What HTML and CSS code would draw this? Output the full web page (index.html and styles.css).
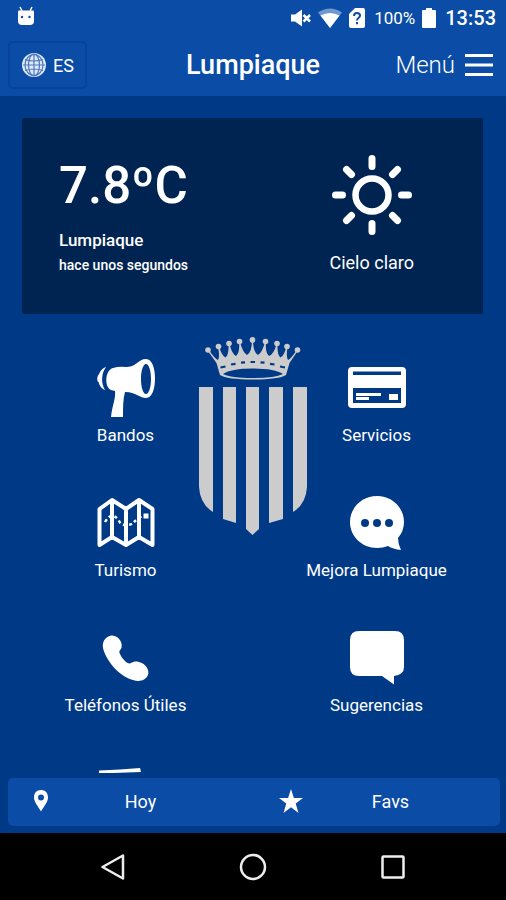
FILE: index.html
```html
<!DOCTYPE html>
<html lang="es">
<head>
<meta charset="utf-8">
<meta name="viewport" content="width=device-width, initial-scale=1">
<title>Lumpiaque</title>
<link rel="stylesheet" href="styles.css">
</head>
<body>
<div class="app">
  <div class="status">
    <svg class="status-app" width="18" height="20" viewBox="0 0 18 20" aria-hidden="true">
      <path d="M3 1l2 4M15 1l-2 4" stroke="#fff" stroke-width="1.500"/>
      <path d="M2 4.500h14q1 0 1 1V15q0 4-4 4H5q-4 0-4-4V5.500q0-1 1-1z" fill="#fff"/>
      <circle cx="5" cy="11" r="1.200" fill="#0a4ca6"/><circle cx="12.500" cy="11" r="1.200" fill="#0a4ca6"/>
    </svg>
    <div class="status-right">
      <svg width="20" height="18" viewBox="0 0 20 18" aria-hidden="true">
        <path d="M0 5.500h4L11 .5v17l-7-5H0z" fill="#fff"/>
        <path d="M12.500 6l6.500 6.500M19 6l-6.500 6.500" stroke="#fff" stroke-width="2.500"/>
      </svg>
      <svg width="24" height="20" viewBox="0 0 24 20" aria-hidden="true">
        <path d="M0 4.500Q12-3.500 24 4.500L12 20z" fill="#6f97d0"/>
        <path d="M2.500 7.500Q12 2.500 21.500 7.500L12 20z" fill="#fff"/>
      </svg>
      <svg width="16" height="20" viewBox="0 0 16 20" aria-hidden="true">
        <path d="M6 0h8q2 0 2 2v16q0 2-2 2H2q-2 0-2-2V6z" fill="#fff"/>
        <path d="M5 8q0-3 3-3t3 2.600Q11 9 9.500 10T8 12.500M8 14v2.200" fill="none" stroke="#0a4ca6" stroke-width="2"/>
      </svg>
      <span class="status-level">100%</span>
      <svg width="14" height="20" viewBox="0 0 14 20" aria-hidden="true">
        <path d="M4 0h6v2h3q1 0 1 1v16q0 1-1 1H1q-1 0-1-1V3q0-1 1-1h3z" fill="#fff"/>
      </svg>
      <span class="status-time">13:53</span>
    </div>
  </div>

  <header class="header">
    <button class="lang" type="button">
      <svg width="24" height="24" viewBox="0 0 24 24" aria-hidden="true">
        <circle cx="12" cy="12" r="12" fill="#dfe9f8"/>
        <g fill="none" stroke="#4a78bf" stroke-width="1.200">
          <path d="M12 1v22M1 12h22M3 6.500q9 3 18 0M3 17.500q9-3 18 0"/>
          <ellipse cx="12" cy="12" rx="5.500" ry="11"/>
          <ellipse cx="12" cy="12" rx="9" ry="10.500"/>
        </g>
      </svg>
      <span>ES</span>
    </button>
    <h1 class="title">Lumpiaque</h1>
    <button class="menu" type="button">
      <span>Menú</span>
      <svg width="28" height="22" viewBox="0 0 28 22" aria-hidden="true">
        <path d="M0 1.500h28M0 11h28M0 20.500h28" stroke="#fff" stroke-width="3"/>
      </svg>
    </button>
  </header>

  <main class="main">
    <section class="weather">
      <div class="weather-now">
        <p class="temp">7.8ºC</p>
        <p class="place">Lumpiaque</p>
        <p class="updated">hace unos segundos</p>
      </div>
      <div class="weather-sky">
        <svg width="80" height="80" viewBox="0 0 80 80" fill="none" stroke="#fff" aria-hidden="true">
          <circle cx="40" cy="40" r="16.500" stroke-width="6.500"/>
          <path d="M40 3.500v8M40 68.500v8M3.500 40h7M69.500 40h7M14.500 14.500l5 5M60.500 60.500l5 5M65.500 14.500l-5 5M19.500 60.500l-5 5" stroke-width="7" stroke-linecap="round"/>
        </svg>
        <p class="sky">Cielo claro</p>
      </div>
    </section>

    <div class="services">
      <svg class="crest" width="108" height="200" viewBox="0 0 108 200" fill="#ccc" aria-hidden="true">
        <path d="M0 50h14v125Q1 167 0 150zM24 50h13v136l-13-4zM47 50h13v142l-6.500 6L47 192zM70 50h14v132l-14 4zM94 50h14v100q-1 17-14 25z"/>
        <path fill-rule="evenodd" d="M8.500 13.500L9.500 12.500Q16 22 19 23 21 20 19 10L20 9.500Q23 19 26.500 20.500 30 18 29.500 7h1Q33 17 37 19 41 16 40 5h1Q44 16 48 18 53 15 53 3h1Q54 15 59 18 63 16 66 5h1Q66 16 70 19 75 17 77.500 7h1Q78 18 81.500 20.500 85 19 87.500 9.500L88.500 10Q87 20 89 23 92 22 98 12.500L99 13.500 90.500 26 87 38Q80 42.500 54 42.500T21 38L17.500 26zM54 31.500q-22 0-30 5.500 8 4 30 4t30-4q-8-5.500-30-5.500z"/>
        <circle cx="9" cy="13" r="2.800"/><circle cx="19.500" cy="9.500" r="2.800"/><circle cx="30" cy="6.500" r="2.800"/><circle cx="40.500" cy="4.500" r="2.800"/><circle cx="53.500" cy="2.900" r="2.800"/><circle cx="66.500" cy="4.500" r="2.800"/><circle cx="78" cy="6.500" r="2.800"/><circle cx="88" cy="9.500" r="2.800"/><circle cx="98.500" cy="13" r="2.800"/>
        <path d="M21.500 30.500l5-1M32 27.500l4.500-.7M42 25.700l4-.4M51.500 25h4.500M61.500 25.300l4 .4M71 26.800l4.500.7M81 29.500l5 1" stroke="#003a87" stroke-width="2.200"/>
      </svg>

      <a class="tile" href="#bandos">
        <svg width="60" height="60" viewBox="0 0 60 60" fill="#fff" aria-hidden="true">
          <path fill-rule="evenodd" d="M50 1c-4 0-6 2-9 4-4 3-7 4-11 4q-7-1-13 1C9 12 8 29 15 32l4 1c1 7-3 15-4 26h12c0-10 0-18 2-25 6 0 10 2 14 4 3 1 4 2 7 2 6 0 9-9 9-19.500S56 1 50 1zm0 5c3 0 5 7 5 15s-2 15-5 15-5-7-5-15 2-15 5-15z"/>
          <path d="M10 9C0 12 0 29 9 32 5 25 5 16 10 9zM3 16q-3 4-1 8h3v-8z"/>
        </svg>
        <span>Bandos</span>
      </a>
      <a class="tile" href="#servicios">
        <svg width="60" height="60" viewBox="0 0 60 60" aria-hidden="true">
          <rect x="1" y="9" width="58" height="41" rx="4" fill="#fff"/>
          <path d="M6 13.500h48V17H6zM6 30h48v15H6z" fill="#003a87"/>
          <path d="M9 35h25v3H9zM9 39h13v3H9zM42 36h9v6h-9z" fill="#fff"/>
        </svg>
        <span>Servicios</span>
      </a>
      <a class="tile" href="#turismo">
        <svg width="60" height="60" viewBox="0 0 60 60" fill="none" stroke="#fff" aria-hidden="true">
          <path d="M3.500 16L16 7l14 9 13-9 13.500 9v36L43 44l-13 8-14-8-12.500 8zM16 7v37M30 16v36M43 7v37" stroke-width="4" stroke-linejoin="round"/>
          <path d="M9 29q4-7 8-6t6 5 7 4 7-2 6-5 8-3" stroke-width="2.500" stroke-dasharray="3 3"/>
          <path d="M47.500 20.500h5v5h-5z" fill="#fff" stroke="none"/>
        </svg>
        <span>Turismo</span>
      </a>
      <a class="tile" href="#mejora">
        <svg width="60" height="60" viewBox="0 0 60 60" aria-hidden="true">
          <path d="M30 3C15 3 3 14.500 3 29s12 26 27 26q6 0 11-2 5 3 13 4-3-6-3-12 6-7 6-16C57 14.500 45 3 30 3z" fill="#fff"/>
          <g fill="#003a87"><circle cx="18" cy="30" r="4"/><circle cx="30" cy="30" r="4"/><circle cx="42" cy="30" r="4"/></g>
        </svg>
        <span>Mejora Lumpiaque</span>
      </a>
      <a class="tile" href="#telefonos">
        <svg width="60" height="60" viewBox="0 0 60 60" fill="#fff" aria-hidden="true">
          <path d="M15 7.500C9 9 6 14 7 20c3 13 17 29 30 32 6 2 12 1 15-5 2-5-3-12-9-13-4-1-6 0-8 1-2 1-4 0-6-2-3-3-4-5-5-7-1-2-1-3 1-5 2-4 0-9-4-12q-3-2-6-1.500z"/>
        </svg>
        <span>Teléfonos Útiles</span>
      </a>
      <a class="tile" href="#sugerencias">
        <svg width="60" height="60" viewBox="0 0 60 60" fill="#fff" aria-hidden="true">
          <path d="M12 3h36q9 0 9 9v27q0 8-10 9v8.500L35 48H12q-9 0-9-9V12q0-9 9-9z"/>
        </svg>
        <span>Sugerencias</span>
      </a>
      <a class="tile" href="#noticias" aria-label="Noticias">
        <svg width="60" height="60" viewBox="0 0 60 60" fill="#fff" aria-hidden="true">
          <path d="M3 7.500l21-1L44 5l1 4-42 1.500z"/>
        </svg>
      </a>
    </div>
  </main>

  <div class="dock">
    <nav class="tabs">
      <a class="tab" href="#hoy">
        <svg width="24" height="24" viewBox="0 0 24 24" aria-hidden="true">
          <path fill-rule="evenodd" d="M12 1C7.500 1 5 4 5 8.500 5 13 9 17 12 22.500 15 17 19 13 19 8.500 19 4 16.500 1 12 1zm0 4.500a3 3 0 1 1 0 6 3 3 0 0 1 0-6z" fill="#fff"/>
        </svg>
        <span>Hoy</span>
      </a>
      <a class="tab" href="#favs">
        <svg width="24" height="24" viewBox="0 0 24 24" aria-hidden="true">
          <path d="M12 0l2.900 9H24l-7.300 5.500L19.500 24 12 18.300 4.500 24l2.800-9.500L0 9h9.100z" fill="#fff"/>
        </svg>
        <span>Favs</span>
      </a>
    </nav>
  </div>

  <div class="system">
    <button type="button" aria-label="Atrás">
      <svg width="28" height="28" viewBox="0 0 28 28" fill="none" stroke="#eee" stroke-width="2.500"><path d="M24 2.500v23L3.500 14z" stroke-linejoin="round"/></svg>
    </button>
    <button type="button" aria-label="Inicio">
      <svg width="28" height="28" viewBox="0 0 28 28" fill="none" stroke="#eee" stroke-width="2.500"><circle cx="14" cy="14" r="12"/></svg>
    </button>
    <button type="button" aria-label="Recientes">
      <svg width="28" height="28" viewBox="0 0 28 28" fill="none" stroke="#eee" stroke-width="2.500"><rect x="3.500" y="3.500" width="21" height="21" rx="1"/></svg>
    </button>
  </div>
</div>
</body>
</html>
```
FILE: styles.css
```css
* {
  box-sizing: border-box;
}

body {
  margin: 0;
  background: #003a87;
  color: #fff;
  font-family: Roboto, sans-serif;
}

p, h1 {
  margin: 0;
}

svg {
  display: block;
  flex: none;
}

a {
  color: inherit;
  text-decoration: none;
}

button {
  padding: 0;
  border: 0;
  background: none;
  color: inherit;
  font: inherit;
  cursor: pointer;
}

.app {
  display: flex;
  flex-direction: column;
  height: 100vh;
}

.status {
  display: flex;
  align-items: center;
  justify-content: space-between;
  height: 36px;
  padding: 0 10px 0 17px;
  background: #0a4ca6;
}

.status-right {
  display: flex;
  align-items: center;
  gap: 7px;
}

.status-level {
  margin-left: 2px;
  font-size: 17px;
}

.status-time {
  margin-left: 2px;
  font-size: 20px;
  font-weight: 500;
}

.status-app {
  margin-bottom: 4px;
}

.header {
  display: grid;
  grid-template-columns: 1fr auto 1fr;
  align-items: center;
  height: 60px;
  padding: 0 8px 2px;
  background: #0a4ca6;
}

.lang {
  display: flex;
  align-items: center;
  justify-self: start;
  gap: 7px;
  height: 48px;
  padding: 0 11px 0 12px;
  border: 2px solid #07439a;
  border-radius: 5px;
  font-size: 18px;
}

.title {
  font-size: 27px;
  font-weight: 500;
}

.menu {
  display: flex;
  align-items: center;
  justify-self: end;
  gap: 10px;
  padding-right: 5px;
  font-size: 24px;
  font-weight: 300;
}

.main {
  flex: 1;
  min-height: 0;
  overflow: hidden;
  padding-top: 22px;
}

.weather {
  display: flex;
  justify-content: space-between;
  height: 196px;
  margin: 0 23px 0 22px;
  padding: 37px 69px 0 37px;
  border-radius: 2px;
  background: #002452;
}

.temp {
  font-size: 51px;
  font-weight: 500;
  line-height: 62px;
}

.place {
  margin-top: 13px;
  font-size: 17px;
  font-weight: 500;
  line-height: 20px;
}

.updated {
  margin-top: 5px;
  font-size: 14px;
  font-weight: 500;
  line-height: 20px;
}

.weather-sky {
  display: flex;
  flex-direction: column;
  align-items: center;
}

.sky {
  margin-top: 18px;
  font-size: 18px;
  line-height: 20px;
}

.services {
  position: relative;
  display: grid;
  grid-template-columns: 1fr 1fr;
  grid-auto-rows: 135px;
  padding: 44px 4px 0 0;
}

.crest {
  position: absolute;
  top: 23px;
  left: 50%;
  transform: translateX(-50%);
}

.tile {
  display: flex;
  flex-direction: column;
  align-items: center;
  gap: 7px;
  font-size: 17px;
  line-height: 20px;
}

.dock {
  padding: 5px 6px 7px 8px;
}

.tabs {
  display: flex;
  gap: 8px;
  height: 48px;
  border-radius: 5px;
  background: #0a4ca6;
}

.tab {
  display: flex;
  flex: 1;
  align-items: center;
  padding: 0 22px 2px 21px;
  font-size: 18px;
}

.tab span {
  flex: 1;
  text-align: center;
}

.system {
  display: flex;
  align-items: center;
  justify-content: center;
  gap: 112px;
  height: 67px;
  background: #000;
}
```
